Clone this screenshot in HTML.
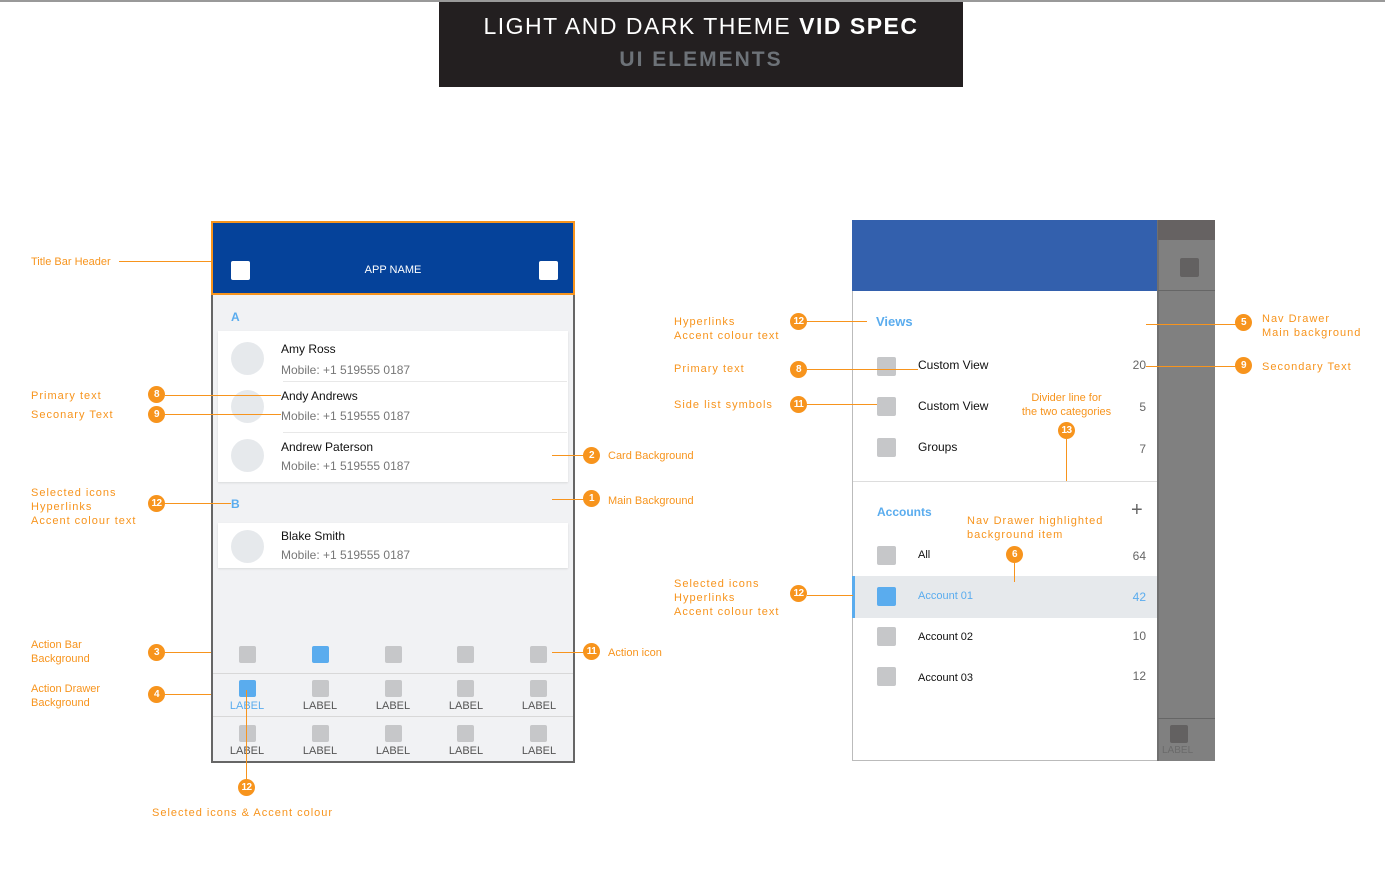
<!DOCTYPE html>
<html><head><meta charset="utf-8"><style>
*{margin:0;padding:0;box-sizing:border-box}
body{width:1385px;height:890px;background:#fff;position:relative;overflow:hidden;font-family:"Liberation Sans",sans-serif}
.a{position:absolute}
.o{color:#f7941d;font-size:11px;letter-spacing:1px;line-height:14px}
.o2{color:#f7941d;font-size:11px;line-height:14px}
.b{position:absolute;width:17px;height:17px;border-radius:50%;background:#f7941d;color:#fff;font-size:10px;font-weight:bold;text-align:center;line-height:17px;letter-spacing:-0.5px}
.l{position:absolute;height:1px;background:#f7941d}
.v{position:absolute;width:1px;background:#f7941d}
.sq{position:absolute;width:17px;height:17px;border-radius:2px;background:#c6c7c9}
.bl{background:#5aacee}
.av{position:absolute;width:33px;height:33px;border-radius:50%;background:#e6e9ec;left:231px}
.nm{position:absolute;left:281px;font-size:12px;color:#111}
.mb{position:absolute;left:281px;font-size:12px;color:#777}
.lab{position:absolute;font-size:11px;color:#555;width:60px;text-align:center}
.nt{position:absolute;left:918px;font-size:12px;color:#111}
.nc{position:absolute;right:239px;font-size:12px;color:#666}
</style></head><body>
<div class="a" style="left:0;top:0;width:1385px;height:2px;background:#999"></div>
<div class="a" style="left:439px;top:2px;width:524px;height:85px;background:#231f20"></div>
<div class="a" style="left:439px;top:13px;width:524px;text-align:center;color:#fff;font-size:23px;letter-spacing:1.5px;font-weight:normal">LIGHT AND DARK THEME <span style="font-weight:bold">VID SPEC</span></div>
<div class="a" style="left:439px;top:48px;width:524px;text-align:center;color:#6d7278;font-size:21px;letter-spacing:2px;font-weight:bold">UI ELEMENTS</div>

<!-- LEFT PHONE -->
<div class="a" style="left:211px;top:293px;width:364px;height:470px;background:#f1f2f4;border:2px solid #666;border-top:none"></div>
<div class="a" style="left:211px;top:221px;width:364px;height:74px;background:#05429a;border:2px solid #f7941d"></div>
<div class="a" style="left:231px;top:261px;width:19px;height:19px;background:#fff;border-radius:2px"></div>
<div class="a" style="left:539px;top:261px;width:19px;height:19px;background:#fff;border-radius:2px"></div>
<div class="a" style="left:211px;top:264px;width:364px;text-align:center;color:#fff;font-size:11px">APP NAME</div>
<div class="a" style="left:231px;top:310px;color:#5aacee;font-weight:bold;font-size:12px">A</div>
<div class="a" style="left:218px;top:331px;width:350px;height:151px;background:#fff;box-shadow:0 1px 2px rgba(0,0,0,.1)"></div>
<div class="a" style="left:283px;top:381px;width:284px;height:1px;background:#e8e8e8"></div>
<div class="a" style="left:283px;top:432px;width:284px;height:1px;background:#e8e8e8"></div>
<div class="av" style="top:342px"></div><div class="av" style="top:390px"></div><div class="av" style="top:439px"></div>
<div class="nm" style="top:342px">Amy Ross</div><div class="mb" style="top:363px">Mobile: +1 519555 0187</div>
<div class="nm" style="top:389px">Andy Andrews</div><div class="mb" style="top:409px">Mobile: +1 519555 0187</div>
<div class="nm" style="top:440px">Andrew Paterson</div><div class="mb" style="top:459px">Mobile: +1 519555 0187</div>
<div class="a" style="left:231px;top:497px;color:#5aacee;font-weight:bold;font-size:12px">B</div>
<div class="a" style="left:218px;top:523px;width:350px;height:45px;background:#fff;box-shadow:0 1px 2px rgba(0,0,0,.1)"></div>
<div class="av" style="top:530px"></div>
<div class="nm" style="top:529px">Blake Smith</div><div class="mb" style="top:548px">Mobile: +1 519555 0187</div>
<div class="a" style="left:213px;top:673px;width:360px;height:1px;background:#d8d8d8"></div>
<div class="a" style="left:213px;top:716px;width:360px;height:1px;background:#d8d8d8"></div>
<div class="sq" style="left:239px;top:646px"></div><div class="sq bl" style="left:312px;top:646px"></div><div class="sq" style="left:385px;top:646px"></div><div class="sq" style="left:457px;top:646px"></div><div class="sq" style="left:530px;top:646px"></div>
<div class="sq bl" style="left:239px;top:680px"></div><div class="sq" style="left:312px;top:680px"></div><div class="sq" style="left:385px;top:680px"></div><div class="sq" style="left:457px;top:680px"></div><div class="sq" style="left:530px;top:680px"></div>
<div class="lab" style="left:217px;top:700px;color:#5aacee">LABEL</div><div class="lab" style="left:290px;top:700px">LABEL</div><div class="lab" style="left:363px;top:700px">LABEL</div><div class="lab" style="left:436px;top:700px">LABEL</div><div class="lab" style="left:509px;top:700px">LABEL</div>
<div class="sq" style="left:239px;top:725px"></div><div class="sq" style="left:312px;top:725px"></div><div class="sq" style="left:385px;top:725px"></div><div class="sq" style="left:457px;top:725px"></div><div class="sq" style="left:530px;top:725px"></div>
<div class="lab" style="left:217px;top:745px">LABEL</div><div class="lab" style="left:290px;top:745px">LABEL</div><div class="lab" style="left:363px;top:745px">LABEL</div><div class="lab" style="left:436px;top:745px">LABEL</div><div class="lab" style="left:509px;top:745px">LABEL</div>

<!-- left annotations -->
<div class="a o2" style="left:31px;top:255px">Title Bar Header</div><div class="l" style="left:119px;top:261px;width:92px"></div>
<div class="a o" style="left:31px;top:389px">Primary text</div><div class="b" style="left:148px;top:386px">8</div><div class="l" style="left:165px;top:395px;width:116px"></div>
<div class="a o" style="left:31px;top:408px">Seconary Text</div><div class="b" style="left:148px;top:406px">9</div><div class="l" style="left:165px;top:414px;width:116px"></div>
<div class="a o" style="left:31px;top:486px">Selected icons<br>Hyperlinks<br>Accent colour text</div><div class="b" style="left:148px;top:495px">12</div><div class="l" style="left:165px;top:503px;width:66px"></div>
<div class="a o2" style="left:31px;top:638px">Action Bar<br>Background</div><div class="b" style="left:148px;top:644px">3</div><div class="l" style="left:165px;top:652px;width:46px"></div>
<div class="a o2" style="left:31px;top:682px">Action Drawer<br>Background</div><div class="b" style="left:148px;top:686px">4</div><div class="l" style="left:165px;top:694px;width:46px"></div>
<div class="v" style="left:246px;top:690px;height:90px"></div><div class="b" style="left:238px;top:779px">12</div>
<div class="a o" style="left:152px;top:806px">Selected icons &amp; Accent colour</div>
<div class="l" style="left:552px;top:455px;width:32px"></div><div class="b" style="left:583px;top:447px">2</div><div class="a o2" style="left:608px;top:449px">Card Background</div>
<div class="l" style="left:552px;top:499px;width:32px"></div><div class="b" style="left:583px;top:490px">1</div><div class="a o2" style="left:608px;top:494px">Main Background</div>
<div class="l" style="left:552px;top:652px;width:32px"></div><div class="b" style="left:583px;top:643px">11</div><div class="a o2" style="left:608px;top:646px">Action icon</div>

<!-- RIGHT DRAWER -->
<div class="a" style="left:852px;top:220px;width:306px;height:541px;background:#fff;border:1px solid #bbb"></div>
<div class="a" style="left:852px;top:220px;width:306px;height:71px;background:#3360ad"></div>
<div class="a" style="left:1157px;top:220px;width:58px;height:541px;background:#808080;border-left:2px solid #707070"></div>
<div class="a" style="left:1158px;top:220px;width:57px;height:20px;background:#666262"></div>
<div class="a" style="left:1158px;top:290px;width:57px;height:1px;background:#666"></div>
<div class="a" style="left:1180px;top:258px;width:19px;height:19px;background:#636161;border-radius:2px"></div>
<div class="a" style="left:1158px;top:718px;width:57px;height:1px;background:#666"></div>
<div class="a" style="left:1170px;top:725px;width:18px;height:18px;background:#636161;border-radius:2px"></div>
<div class="a" style="left:1162px;top:745px;font-size:10px;color:#6a6a6a">LABEL</div>
<div class="a" style="left:876px;top:314px;color:#5aacee;font-weight:bold;font-size:13px">Views</div>
<div class="sq" style="left:877px;top:357px;width:19px;height:19px"></div><div class="nt" style="top:358px">Custom View</div><div class="nc" style="top:358px">20</div>
<div class="sq" style="left:877px;top:397px;width:19px;height:19px"></div><div class="nt" style="top:399px">Custom View</div><div class="nc" style="top:400px">5</div>
<div class="sq" style="left:877px;top:438px;width:19px;height:19px"></div><div class="nt" style="top:440px">Groups</div><div class="nc" style="top:442px">7</div>
<div class="a" style="left:853px;top:481px;width:304px;height:1px;background:#ddd"></div>
<div class="a" style="left:877px;top:505px;color:#5aacee;font-weight:bold;font-size:12px">Accounts</div>
<div class="a" style="left:1131px;top:499px;color:#666;font-size:20px">+</div>
<div class="sq" style="left:877px;top:546px;width:19px;height:19px"></div><div class="nt" style="top:549px;font-size:11px">All</div><div class="nc" style="top:549px">64</div>
<div class="a" style="left:852px;top:576px;width:305px;height:42px;background:#e6e9ec;border-left:3px solid #5aacee"></div>
<div class="sq bl" style="left:877px;top:587px;width:19px;height:19px"></div><div class="nt" style="top:590px;font-size:11px;color:#5aacee">Account 01</div><div class="nc" style="top:590px;color:#5aacee">42</div>
<div class="sq" style="left:877px;top:627px;width:19px;height:19px"></div><div class="nt" style="top:631px;font-size:11px">Account 02</div><div class="nc" style="top:629px">10</div>
<div class="sq" style="left:877px;top:667px;width:19px;height:19px"></div><div class="nt" style="top:672px;font-size:11px">Account 03</div><div class="nc" style="top:669px">12</div>

<!-- right annotations -->
<div class="a o" style="left:674px;top:315px">Hyperlinks<br>Accent colour text</div><div class="b" style="left:790px;top:313px">12</div><div class="l" style="left:807px;top:321px;width:60px"></div>
<div class="a o" style="left:674px;top:362px">Primary text</div><div class="b" style="left:790px;top:361px">8</div><div class="l" style="left:807px;top:369px;width:111px"></div>
<div class="a o" style="left:674px;top:398px">Side list symbols</div><div class="b" style="left:790px;top:396px">11</div><div class="l" style="left:807px;top:404px;width:70px"></div>
<div class="a o" style="left:674px;top:577px">Selected icons<br>Hyperlinks<br>Accent colour text</div><div class="b" style="left:790px;top:585px">12</div><div class="l" style="left:807px;top:595px;width:46px"></div>
<div class="a o2" style="left:1020px;top:391px;width:93px;text-align:center">Divider line for<br>the two categories</div>
<div class="b" style="left:1058px;top:422px">13</div><div class="v" style="left:1066px;top:439px;height:42px"></div>
<div class="a o" style="left:967px;top:514px">Nav Drawer highlighted<br>background item</div>
<div class="b" style="left:1006px;top:546px">6</div><div class="v" style="left:1014px;top:563px;height:19px"></div>
<div class="l" style="left:1146px;top:324px;width:90px"></div><div class="b" style="left:1235px;top:314px">5</div>
<div class="a o" style="left:1262px;top:312px">Nav Drawer<br>Main background</div>
<div class="l" style="left:1146px;top:366px;width:90px"></div><div class="b" style="left:1235px;top:357px">9</div>
<div class="a o" style="left:1262px;top:360px">Secondary Text</div>
</body></html>
